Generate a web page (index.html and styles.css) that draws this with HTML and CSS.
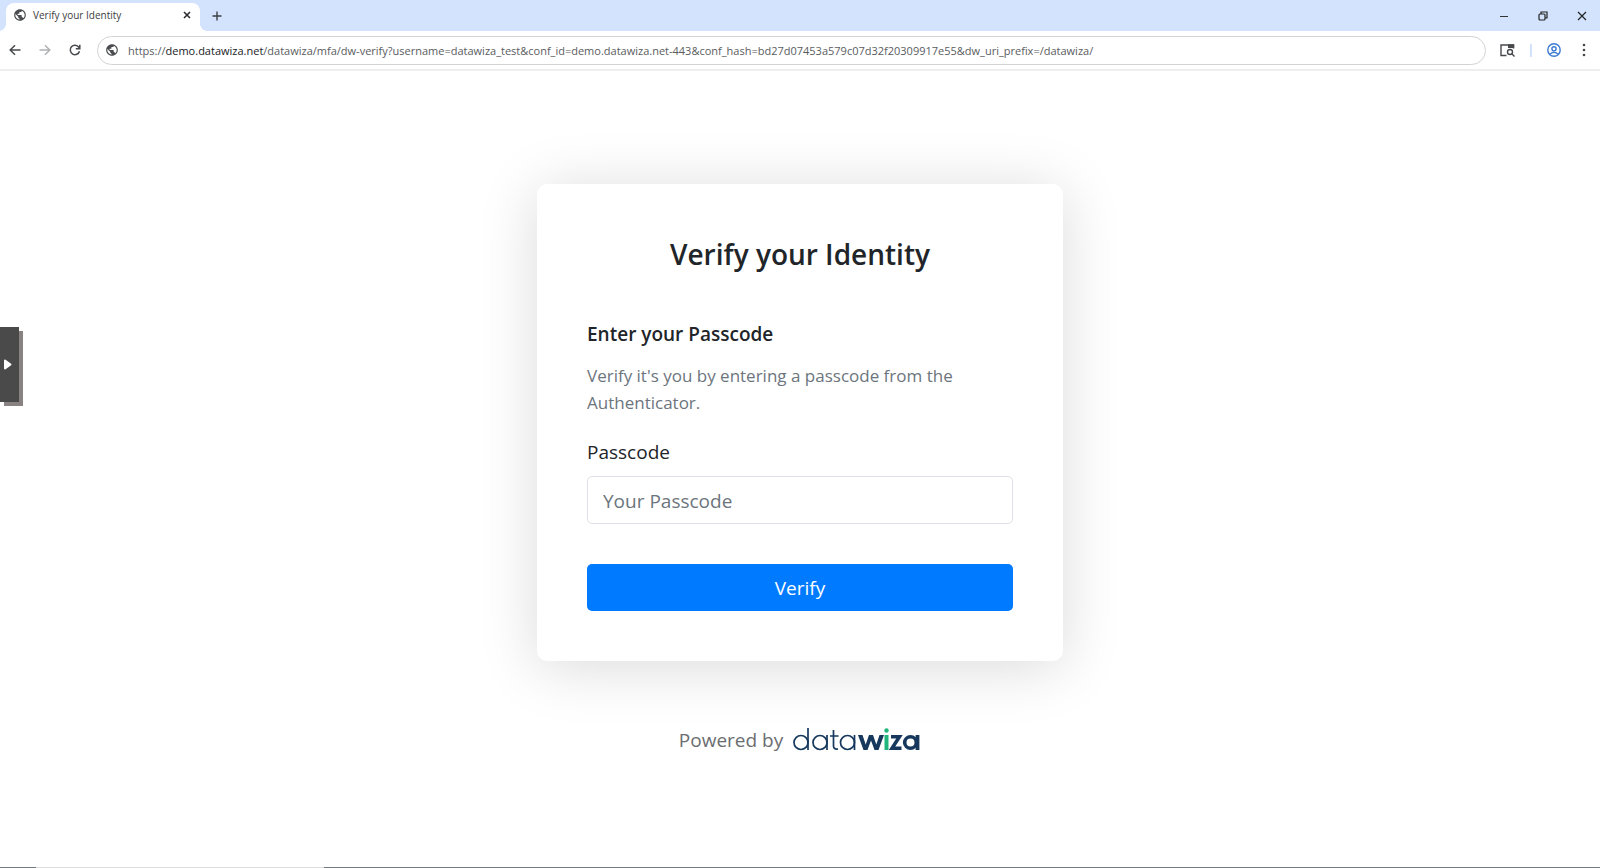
FILE: index.html
```
<!DOCTYPE html>
<html lang="en">
<head>
    <meta charset="UTF-8">
    <meta name="viewport" content="width=device-width, initial-scale=1.0">
    <title>Verify your Identity</title>
    <link rel="stylesheet" href="styles.css">
</head>
<body>
<svg width="0" height="0" class="symbols" aria-hidden="true">
    <symbol id="globe" viewBox="0 0 24 24">
        <path d="M12 2C6.48 2 2 6.48 2 12s4.480 10 10 10 10-4.480 10-10S17.520 2 12 2zM4 12c0-.61.08-1.210.210-1.780L8.990 15v1c0 1.100.9 2 2 2v1.930C7.060 19.430 4 16.070 4 12zm13.890 5.400c-.26-.81-1-1.400-1.900-1.400h-1v-3c0-.55-.45-1-1-1h-6v-2h2c.55 0 1-.45 1-1V7h2c1.100 0 2-.9 2-2v-.41C17.920 5.770 20 8.650 20 12c0 2.080-.81 3.980-2.110 5.400z"/>
    </symbol>
</svg>

<header class="browser">
    <div class="tab-bar">
        <div class="tab">
            <svg class="icon-globe" viewBox="0 0 24 24"><use href="#globe"/></svg>
            <span class="tab-title">Verify your Identity</span>
            <button class="btn-icon" aria-label="Close tab">
                <svg width="8" height="8" viewBox="0 0 8 8"><path d="M1 1l6 6M7 1l-6 6" stroke="#2b2d31" stroke-width="1.600"/></svg>
            </button>
        </div>
        <button class="btn-icon new-tab" aria-label="New tab">
            <svg width="10" height="10" viewBox="0 0 10 10"><path d="M5 0.500v9M0.500 5h9" stroke="#3c4043" stroke-width="1.400"/></svg>
        </button>
        <div class="window-btns">
            <button class="btn-icon" aria-label="Minimize">
                <svg width="10" height="10" viewBox="0 0 10 10"><path d="M1 5.500h8" stroke="#333"/></svg>
            </button>
            <button class="btn-icon" aria-label="Restore">
                <svg width="10" height="10" viewBox="0 0 10 10" fill="none" stroke="#222" stroke-width="1.200"><rect x="1" y="3" width="6" height="6" rx="1"/><path d="M3 3V1h6v6H7"/></svg>
            </button>
            <button class="btn-icon" aria-label="Close">
                <svg width="10" height="10" viewBox="0 0 10 10"><path d="M1 1l8 8M9 1l-8 8" stroke="#222" stroke-width="1.200"/></svg>
            </button>
        </div>
    </div>
    <div class="toolbar">
        <button class="btn-icon" aria-label="Back">
            <svg width="12" height="12" viewBox="0 0 12 12" fill="none" stroke="#47494d" stroke-width="1.500"><path d="M11.500 6H1.500M6 1.200L1.200 6 6 10.800"/></svg>
        </button>
        <button class="btn-icon" aria-label="Forward">
            <svg width="12" height="12" viewBox="0 0 12 12" fill="none" stroke="#b0b1b3" stroke-width="1.500"><path d="M0.500 6h10M6 1.200L10.800 6 6 10.800"/></svg>
        </button>
        <button class="btn-icon" aria-label="Reload">
            <svg width="12" height="12" viewBox="0 0 12 12" fill="none" stroke="#47494d" stroke-width="1.500"><path d="M10.500 7.200A4.700 4.700 0 1 1 9.800 3.200L10.800 4.500M10.800 0.800v4H6.800"/></svg>
        </button>
        <div class="address">
            <svg class="icon-globe" viewBox="0 0 24 24"><use href="#globe"/></svg>
            <span class="url">https://<b>demo.datawiza.net</b>/datawiza/mfa/dw-verify?username=datawiza_test&amp;conf_id=demo.datawiza.net-443&amp;conf_hash=bd27d07453a579c07d32f20309917e55&amp;dw_uri_prefix=/datawiza/</span>
        </div>
        <div class="tools">
            <button class="btn-icon" aria-label="Search tabs">
                <svg width="15" height="13" viewBox="0 0 15 13" fill="none" stroke="#47494d" stroke-width="1.400"><path d="M6.500 11.500H1V1h12.500v3.500"/><path d="M8 0.300h6.200v3.700H8z" fill="#47494d" stroke="none"/><circle cx="10" cy="8" r="2.500"/><path d="M11.800 9.800l2.700 2.700"/></svg>
            </button>
            <span class="divider"></span>
            <button class="btn-icon" aria-label="Profile">
                <svg width="14" height="14" viewBox="0 0 14 14" fill="none" stroke="#3a7bd0" stroke-width="1.400"><circle cx="7" cy="7" r="6.200"/><circle cx="7" cy="5.800" r="2.100"/><path d="M3 11.200c1.800-2.400 6.200-2.400 8 0"/></svg>
            </button>
            <button class="btn-icon menu" aria-label="Menu">
                <svg width="4" height="14" viewBox="0 0 4 14" fill="#47494d"><circle cx="2" cy="2" r="1.300"/><circle cx="2" cy="7" r="1.300"/><circle cx="2" cy="12" r="1.300"/></svg>
            </button>
        </div>
    </div>
</header>

<button class="side-handle" aria-label="Open panel">
    <svg width="9" height="11" viewBox="0 0 9 11"><path d="M2 1.500l5.500 4L2 9.500z" fill="#fff" stroke="#fff" stroke-width="2" stroke-linejoin="round"/></svg>
</button>

<main>
    <form class="card">
        <h1>Verify your Identity</h1>
        <h2>Enter your Passcode</h2>
        <p class="hint">Verify it's you by entering a passcode from the Authenticator.</p>
        <label for="passcode">Passcode</label>
        <input type="text" id="passcode" placeholder="Your Passcode">
        <button type="button" class="btn-verify">Verify</button>
    </form>
    <footer>
        <span>Powered by</span>
        <svg class="logo" width="128" height="26" viewBox="0 0 128 26" role="img" aria-label="datawiza" fill="none" stroke="#16385c">
            <g stroke-width="1.700">
                <circle cx="8" cy="15.500" r="7"/>
                <path d="M15 1v22"/>
                <circle cx="27" cy="15.500" r="7"/>
                <path d="M34 8v15"/>
                <path d="M40.500 3v16q0 3.500 4.500 3M37 9h8.500"/>
                <circle cx="54.500" cy="15.500" r="7"/>
                <path d="M61.500 8v15"/>
            </g>
            <path d="M65 8h4.500l3.200 9.500L76 8h4l3.300 9.500L86.500 8H91l-5.500 15h-4L78 13.500 74.500 23h-4z" fill="#16385c" stroke="none"/>
            <path d="M93.500 8v15" stroke="#1fb57c" stroke-width="4"/>
            <circle cx="93.500" cy="3.500" r="2.200" fill="#1fb57c" stroke="none"/>
            <path d="M98 9.700h8.500l-7.500 11.600h9.500" stroke-width="3.500"/>
            <circle cx="117.500" cy="15.500" r="5.800" stroke-width="3.600"/>
            <path d="M124.500 8v15" stroke-width="3.800"/>
        </svg>
    </footer>
</main>

<div class="bottom-edge"><span></span></div>
</body>
</html>
```
FILE: styles.css
```
*{
    box-sizing:border-box;
}
body{
    margin:0;
    min-height:100vh;
    display:flex;
    flex-direction:column;
    font-family:"Open Sans", "Noto Sans", sans-serif;
    color:#212529;
    background-color:#fff;
}
button, input{
    font-family:inherit;
}
svg{
    display:block;
}
.symbols{
    position:absolute;
}
.btn-icon{
    display:flex;
    align-items:center;
    justify-content:center;
    padding:0;
    border:0;
    background:none;
}

/* browser bar */
.browser{
    border-bottom:2px solid #eee;
}
.tab-bar{
    display:flex;
    align-items:center;
    height:31px;
    padding-left:6px;
    background-color:#d3e3fd;
}
.tab{
    position:relative;
    align-self:flex-end;
    display:flex;
    align-items:center;
    width:194px;
    height:28px;
    padding:0 9px 4px 7px;
    border-radius:8px 8px 0 0;
    background-color:#fff;
}
.tab::before, .tab::after{
    content:"";
    position:absolute;
    bottom:0;
    width:8px;
    height:8px;
}
.tab::before{
    left:-8px;
    background:radial-gradient(circle at 0 0, #d3e3fd 8px, #fff 8px);
}
.tab::after{
    right:-8px;
    background:radial-gradient(circle at 100% 0, #d3e3fd 8px, #fff 8px);
}
.icon-globe{
    flex:none;
    width:14px;
    height:14px;
    fill:#4a4c50;
}
.tab-title{
    flex:1;
    margin-left:6px;
    font-size:10px;
    color:#3c3e42;
}
.new-tab{
    margin-left:12px;
}
.window-btns{
    display:flex;
    gap:3px;
    margin-left:auto;
}
.window-btns .btn-icon{
    width:36px;
    height:28px;
}
.toolbar{
    display:flex;
    align-items:center;
    gap:18px;
    height:38px;
    padding:0 14px 0 9px;
}
.address{
    flex:1;
    display:flex;
    align-items:center;
    gap:9px;
    height:29px;
    margin:0 -4px 0 -2px;
    padding-left:7px;
    border:1px solid #d2d3d5;
    border-radius:15px;
}
.url{
    font-size:11px;
    color:#5a5c60;
    white-space:nowrap;
}
.url b{
    font-weight:400;
    color:#202124;
}
.tools{
    display:flex;
    align-items:center;
    gap:15px;
}
.tools .menu{
    margin-left:6px;
}
.divider{
    width:2px;
    height:13px;
    background-color:#d3e3fd;
}

.side-handle{
    position:absolute;
    top:327px;
    left:0;
    width:19px;
    height:75px;
    padding:0 0 0 3px;
    border:0;
    background-color:#4b4a4a;
    box-shadow:4px 4px 0 #898282;
}

/* content */
main{
    flex:1;
    padding:113px 0 40px;
}
.card{
    display:flex;
    flex-direction:column;
    width:100%;
    max-width:526px;
    margin:0 auto;
    padding:50px;
    border-radius:10px;
    background-color:#fff;
    box-shadow:0 6px 60px rgba(0, 0, 0, 0.15);
}
h1{
    margin:0 0 48px;
    font-size:28px;
    line-height:40px;
    font-weight:600;
    text-align:center;
}
h2{
    margin:0 0 16px;
    font-size:19px;
    line-height:24px;
    font-weight:600;
}
.hint{
    margin:0 0 22px;
    font-size:17px;
    line-height:27px;
    color:#6c757d;
}
label{
    margin-bottom:10px;
    font-size:19px;
    line-height:28px;
}
input{
    width:100%;
    height:48px;
    padding:2px 15px 0;
    border:1px solid #dee2e6;
    border-radius:5px;
    font-size:19px;
    color:#212529;
}
input::placeholder{
    color:#6c757d;
}
.btn-verify{
    height:47px;
    margin-top:40px;
    border:0;
    border-radius:5px;
    background-color:#007bff;
    font-size:19px;
    color:#fff;
}
footer{
    display:flex;
    align-items:center;
    justify-content:center;
    gap:10px;
    margin-top:64px;
    font-size:19px;
    line-height:30px;
    color:#6b6d70;
}
.bottom-edge{
    height:1px;
    padding-left:36px;
    background-color:#747b80;
}
.bottom-edge span{
    display:block;
    width:288px;
    height:1px;
    background-color:#dedede;
}
```
